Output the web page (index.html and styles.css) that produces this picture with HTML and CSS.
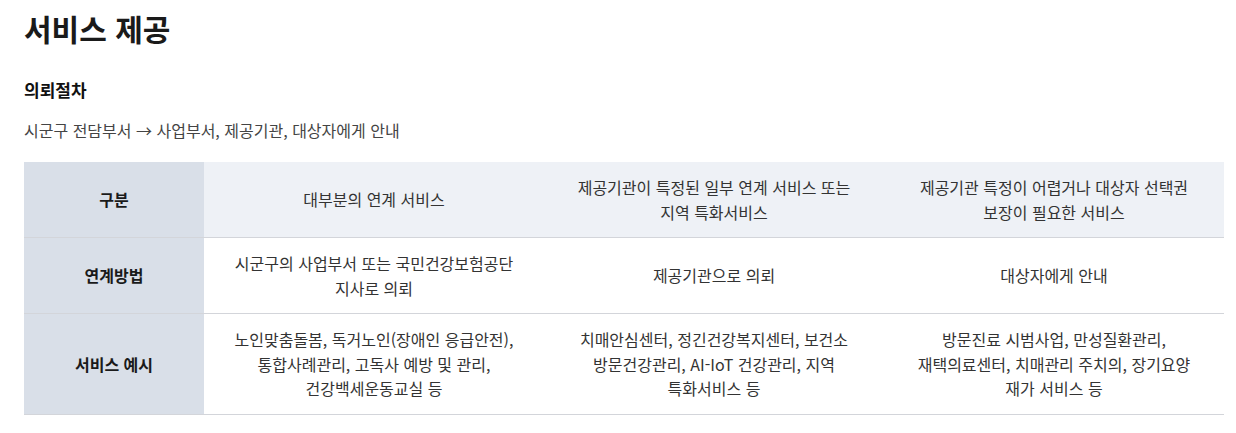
FILE: index.html
```html
<!DOCTYPE html>
<html lang="ko">
<head>
<meta charset="utf-8">
<link rel="stylesheet" href="styles.css">
</head>
<body>
<main class="page">
  <h1 class="title">서비스 제공</h1>
  <h2 class="subtitle">의뢰절차</h2>
  <p class="desc">시군구 전담부서 → 사업부서, 제공기관, 대상자에게 안내</p>
  <table class="info-table">
    <colgroup>
      <col class="c-head">
      <col class="c-data">
      <col class="c-data">
      <col class="c-data">
    </colgroup>
    <thead>
      <tr>
        <th class="row-head">구분</th>
        <th class="col-head">대부분의 연계 서비스</th>
        <th class="col-head">제공기관이 특정된 일부 연계 서비스 또는 지역 특화서비스</th>
        <th class="col-head">제공기관 특정이 어렵거나 대상자 선택권 보장이 필요한 서비스</th>
      </tr>
    </thead>
    <tbody>
      <tr>
        <th class="row-head">연계방법</th>
        <td>시군구의 사업부서 또는 국민건강보험공단 지사로 의뢰</td>
        <td>제공기관으로 의뢰</td>
        <td>대상자에게 안내</td>
      </tr>
      <tr>
        <th class="row-head">서비스 예시</th>
        <td>노인맞춤돌봄, 독거노인(장애인 응급안전), 통합사례관리, 고독사 예방 및 관리, 건강백세운동교실 등</td>
        <td>치매안심센터, 정긴건강복지센터, 보건소 방문건강관리, AI-IoT 건강관리, 지역 특화서비스 등</td>
        <td>방문진료 시범사업, 만성질환관리, 재택의료센터, 치매관리 주치의, 장기요양 재가 서비스 등</td>
      </tr>
    </tbody>
  </table>
</main>
</body>
</html>
```

FILE: styles.css
```css
html, body {
  margin: 0;
  padding: 0;
  background: #ffffff;
}

body {
  font-family: "Noto Sans CJK KR", "Noto Sans", sans-serif;
  color: #222;
}

.page {
  padding: 8px 12px 0 24px;
}

.title {
  margin: 0;
  font-size: 30px;
  line-height: 40px;
  font-weight: 700;
  color: #1a1a1a;
}

.subtitle {
  margin: 29px 0 0;
  font-size: 17px;
  line-height: 26px;
  font-weight: 700;
  color: #111;
}

.desc {
  margin: 15px 0 0;
  font-size: 16px;
  line-height: 24px;
  color: #444;
}

.info-table {
  margin-top: 20px;
  width: 1200px;
  border-collapse: collapse;
  table-layout: fixed;
  font-size: 16px;
  line-height: 24.5px;
  color: #333;
  word-break: keep-all;
}

.c-head {
  width: 180px;
}

.info-table th,
.info-table td {
  padding: 13px 20px;
  text-align: center;
  vertical-align: middle;
  border-bottom: 1px solid #d3d5da;
}

.row-head {
  background: #d9dfe8;
  font-weight: 700;
  color: #1a1a1a;
}

.col-head {
  background: #eef1f6;
  font-weight: 400;
  color: #333;
}

.info-table tbody td {
  background: #ffffff;
}
```
